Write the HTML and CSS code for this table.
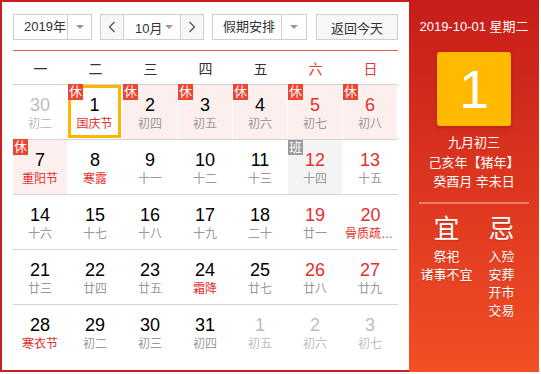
FILE: index.html
```html
<!DOCTYPE html>
<html lang="zh-CN">
<head>
<meta charset="utf-8">
<title>万年历</title>
<link rel="stylesheet" href="styles.css">
</head>
<body>
<div class="cal">
  <div class="main">
    <div class="toolbar">
      <div class="select year"><span class="sel-text">2019年</span><span class="sel-arrow"><i class="tri"></i></span></div>
      <div class="month-group">
        <button class="nav"><svg width="8" height="12" viewBox="0 0 8 12"><polyline points="6.5,1 1.5,6 6.5,11" fill="none" stroke="#555" stroke-width="1.3"/></svg></button>
        <div class="month-sel"><span>10月</span><i class="tri"></i></div>
        <button class="nav"><svg width="8" height="12" viewBox="0 0 8 12"><polyline points="1.5,1 6.5,6 1.5,11" fill="none" stroke="#555" stroke-width="1.3"/></svg></button>
      </div>
      <div class="select holiday"><span class="sel-text">假期安排</span><span class="sel-arrow"><i class="tri"></i></span></div>
      <button class="today">返回今天</button>
    </div>
    <div class="weekdays">
      <span>一</span><span>二</span><span>三</span><span>四</span><span>五</span><span class="we">六</span><span class="we">日</span>
    </div>
    <div class="week">
      <div class="day other"><span class="num">30</span><span class="lunar">初二</span></div>
      <div class="day sel"><span class="badge">休</span><span class="num">1</span><span class="lunar fest">国庆节</span></div>
      <div class="day hol"><span class="badge">休</span><span class="num">2</span><span class="lunar">初四</span></div>
      <div class="day hol"><span class="badge">休</span><span class="num">3</span><span class="lunar">初五</span></div>
      <div class="day hol"><span class="badge">休</span><span class="num">4</span><span class="lunar">初六</span></div>
      <div class="day hol weekend"><span class="badge">休</span><span class="num">5</span><span class="lunar">初七</span></div>
      <div class="day hol weekend"><span class="badge">休</span><span class="num">6</span><span class="lunar">初八</span></div>
    </div>
    <div class="week">
      <div class="day hol"><span class="badge">休</span><span class="num">7</span><span class="lunar fest">重阳节</span></div>
      <div class="day"><span class="num">8</span><span class="lunar fest">寒露</span></div>
      <div class="day"><span class="num">9</span><span class="lunar">十一</span></div>
      <div class="day"><span class="num">10</span><span class="lunar">十二</span></div>
      <div class="day"><span class="num">11</span><span class="lunar">十三</span></div>
      <div class="day work weekend"><span class="badge grey">班</span><span class="num">12</span><span class="lunar">十四</span></div>
      <div class="day weekend"><span class="num">13</span><span class="lunar">十五</span></div>
    </div>
    <div class="week">
      <div class="day"><span class="num">14</span><span class="lunar">十六</span></div>
      <div class="day"><span class="num">15</span><span class="lunar">十七</span></div>
      <div class="day"><span class="num">16</span><span class="lunar">十八</span></div>
      <div class="day"><span class="num">17</span><span class="lunar">十九</span></div>
      <div class="day"><span class="num">18</span><span class="lunar">二十</span></div>
      <div class="day weekend"><span class="num">19</span><span class="lunar">廿一</span></div>
      <div class="day weekend wide"><span class="num">20</span><span class="lunar fest" title="骨质疏松日">骨质疏松日</span></div>
    </div>
    <div class="week">
      <div class="day"><span class="num">21</span><span class="lunar">廿三</span></div>
      <div class="day"><span class="num">22</span><span class="lunar">廿四</span></div>
      <div class="day"><span class="num">23</span><span class="lunar">廿五</span></div>
      <div class="day"><span class="num">24</span><span class="lunar fest">霜降</span></div>
      <div class="day"><span class="num">25</span><span class="lunar">廿七</span></div>
      <div class="day weekend"><span class="num">26</span><span class="lunar">廿八</span></div>
      <div class="day weekend"><span class="num">27</span><span class="lunar">廿九</span></div>
    </div>
    <div class="week last">
      <div class="day"><span class="num">28</span><span class="lunar fest">寒衣节</span></div>
      <div class="day"><span class="num">29</span><span class="lunar">初二</span></div>
      <div class="day"><span class="num">30</span><span class="lunar">初三</span></div>
      <div class="day"><span class="num">31</span><span class="lunar">初四</span></div>
      <div class="day other"><span class="num">1</span><span class="lunar">初五</span></div>
      <div class="day other"><span class="num">2</span><span class="lunar">初六</span></div>
      <div class="day other"><span class="num">3</span><span class="lunar">初七</span></div>
    </div>
  </div>
  <div class="side">
    <div class="side-date">2019-10-01 星期二</div>
    <div class="big-day">1</div>
    <div class="side-lunar">
      <div>九月初三</div>
      <div>己亥年【猪年】</div>
      <div>癸酉月 辛未日</div>
    </div>
    <div class="side-line"></div>
    <div class="yiji">
      <div class="yj-col">
        <div class="yj-title">宜</div>
        <div>祭祀</div>
        <div>诸事不宜</div>
      </div>
      <div class="yj-col">
        <div class="yj-title">忌</div>
        <div>入殓</div>
        <div>安葬</div>
        <div>开市</div>
        <div>交易</div>
      </div>
    </div>
  </div>
</div>
</body>
</html>
```
FILE: styles.css
```css
* { box-sizing: border-box; }
html, body { margin: 0; padding: 0; background: #fff; }
body {
  font-family: "Liberation Sans", "Noto Sans CJK SC", sans-serif;
  color: #333;
}
.cal {
  width: 539px;
  height: 372px;
  border: 2px solid #c81e1d;
  border-right: none;
  display: flex;
}
.main {
  width: 407px;
  padding: 12px 11px 0 11px;
}
.toolbar {
  display: flex;
  height: 26px;
  font-size: 13px;
}
.select {
  display: flex;
  border: 1px solid #cfcfcf;
  background: #fff;
  height: 26px;
}
.year { width: 79px; margin-right: 8px; }
.holiday { width: 95px; margin-right: 9px; }
.sel-text {
  flex: 1;
  padding-left: 10px;
  line-height: 24px;
  color: #333;
  white-space: nowrap;
}
.sel-arrow {
  width: 24px;
  border-left: 1px solid #cfcfcf;
  display: flex;
  align-items: center;
  justify-content: center;
}
.holiday .sel-arrow { width: 25px; }
.tri {
  display: block;
  width: 0;
  height: 0;
  border-left: 4px solid transparent;
  border-right: 4px solid transparent;
  border-top: 4px solid #999;
}
.month-group {
  display: flex;
  width: 104px;
  margin-right: 8px;
  border: 1px solid #cfcfcf;
  height: 26px;
}
.nav {
  width: 22px;
  padding: 0;
  margin: 0;
  border: none;
  background: #f6f6f6;
  display: flex;
  align-items: center;
  justify-content: center;
}
.month-sel {
  flex: 1;
  display: flex;
  align-items: center;
  justify-content: space-between;
  padding: 0 7px 0 11px;
  border-left: 1px solid #cfcfcf;
  border-right: 1px solid #cfcfcf;
  background: #fff;
  color: #333;
}
.today {
  width: 82px;
  height: 26px;
  margin: 0;
  padding: 0;
  border: 1px solid #cfcfcf;
  background: #f7f7f7;
  font-family: inherit;
  font-size: 13px;
  color: #333;
}
.weekdays {
  margin-top: 10px;
  border-top: 1px solid #ee5a4a;
  border-bottom: 1px solid #d4d4d4;
  height: 35px;
  display: grid;
  grid-template-columns: repeat(7, 55px);
  align-items: center;
  font-size: 14px;
  color: #333;
}
.weekdays span { text-align: center; }
.weekdays .we { color: #e33a32; }
.week {
  display: grid;
  grid-template-columns: repeat(7, 55px);
  height: 55px;
  border-bottom: 1px solid #d4d4d4;
}
.week.last { border-bottom: none; }
.day {
  position: relative;
  width: 54px;
  height: 54px;
  padding: 9px 4px 0 4px;
  display: flex;
  flex-direction: column;
  align-items: center;
}
.day.wide { padding-left: 2px; padding-right: 1px; }
.day.hol { background: #fdefee; }
.day.work { background: #f4f4f4; }
.day.sel {
  border: 3px solid #ffb600;
  width: 53px;
  height: 53px;
  padding: 6px 1px 0 1px;
  background: #fff;
}
.num {
  font-size: 18px;
  line-height: 22px;
  color: #000;
}
.lunar {
  font-size: 12px;
  line-height: 16px;
  color: #999;
  max-width: 100%;
  white-space: nowrap;
  overflow: hidden;
  text-overflow: ellipsis;
}
.lunar.fest { color: #e3302b; }
.weekend .num { color: #e3302b; }
.other .num, .other .lunar { color: #bdbdbd; }
.badge {
  position: absolute;
  left: 0;
  top: -1px;
  width: 15px;
  height: 16px;
  background: #ec4532;
  color: #fff;
  font-size: 13px;
  line-height: 16px;
  text-align: center;
}
.day.sel .badge { left: -3px; top: -4px; }
.badge.grey { background: #9a9a9a; top: 0; height: 15px; line-height: 15px; }
.side {
  width: 130px;
  margin: -2px 0 -2px 0;
  background: linear-gradient(#c71d1a, #f24f25);
  color: #fff;
  display: flex;
  flex-direction: column;
  align-items: center;
  padding: 17px 10px 0 10px;
}
.side-date {
  font-size: 13px;
  line-height: 20px;
  white-space: nowrap;
}
.big-day {
  margin-top: 15px;
  width: 74px;
  height: 74px;
  background: #ffba00;
  border-radius: 3px;
  box-shadow: 0 2px 4px rgba(120, 20, 0, 0.35);
  font-size: 54px;
  line-height: 74px;
  text-align: center;
  color: #fff;
}
.side-lunar {
  margin-top: 7px;
  font-size: 13px;
  line-height: 19.5px;
  text-align: center;
}
.side-line {
  margin-top: 10px;
  width: 110px;
  height: 2px;
  background: rgba(255, 255, 255, 0.35);
}
.yiji {
  margin-top: 10px;
  width: 110px;
  display: grid;
  grid-template-columns: 55px 55px;
  font-size: 13px;
  line-height: 18.2px;
  text-align: center;
  text-shadow: 0 1px 1px rgba(120, 20, 0, 0.25);
}
.yj-col { display: flex; flex-direction: column; align-items: center; white-space: nowrap; }
.yj-title {
  font-size: 26px;
  line-height: 30px;
  margin-bottom: 4px;
}
```
